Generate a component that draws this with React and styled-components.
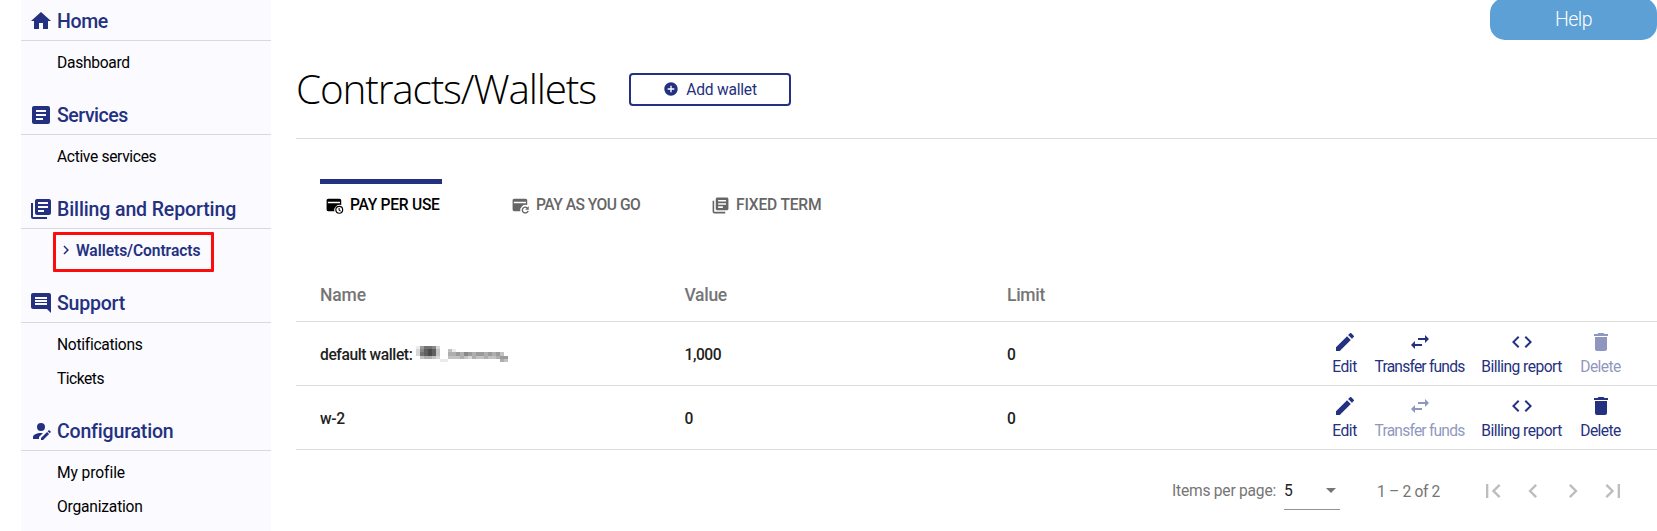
import React from 'react';
import styled, { createGlobalStyle } from 'styled-components';
import {
  MdHome, MdArticle, MdLibraryBooks, MdComment, MdChevronRight, MdChevronLeft,
  MdAddCircle, MdEdit, MdSwapHoriz, MdCode, MdDelete, MdArrowDropDown,
  MdFirstPage, MdLastPage,
} from 'react-icons/md';

const navy = '#243180';
const line = '#dedede';

const GlobalStyle = createGlobalStyle`
  *, *::before, *::after { box-sizing: border-box; }
  body {
    margin: 0;
    overflow: hidden;
    background: #fff;
    color: #000;
    font-family: Roboto, 'Open Sans', sans-serif;
    font-size: 15.6px;
  }
  svg { display: block; flex: none; }
`;

const Page = styled.div`
  display: flex;
  height: 531px;
  padding-left: 21px;
  overflow: hidden;
`;

/* Letter spacing is given per label, in px. */
const Label = styled.span`
  letter-spacing: ${(p) => p.$track || 0}px;
  white-space: pre;
`;

const Sidebar = styled.nav`
  flex: none;
  width: 250px;
  background: #fafaff;
`;

const SectionHead = styled.div`
  display: flex;
  align-items: center;
  gap: 4px;
  height: 41px;
  padding: 2px 0 0 8px;
  border-bottom: 1px solid #d9d9e0;
  color: ${navy};
  font-size: 19.5px;
  font-weight: 500;
`;

const SectionItems = styled.div`
  padding: 4px 0 15px 36px;
`;

const NavItem = styled.a`
  position: relative;
  display: flex;
  align-items: center;
  gap: 1px;
  height: 34px;
  color: ${(p) => (p.$active ? navy : '#000')};
  font-weight: ${(p) => (p.$active ? 600 : 400)};
  ${Label} { padding-top: 2px; }
`;

const Highlight = styled.span`
  position: absolute;
  left: -4px;
  top: -1px;
  width: 161px;
  height: 40px;
  border: 3px solid #fb0d0d;
  border-radius: 1px;
`;

const Main = styled.main`
  flex: 1;
  display: flex;
  flex-direction: column;
  margin-left: 25px;
`;

const TopBar = styled.div`
  display: flex;
  justify-content: flex-end;
  height: 40px;
`;

const HelpButton = styled.button`
  width: 167px;
  height: 42px;
  margin: -2px 0 0;
  padding: 1px 0 0;
  border: 0;
  border-radius: 15px;
  background: #5da0d5;
  color: #fff;
  font: 300 19.5px Roboto, sans-serif;
`;

const Heading = styled.header`
  display: flex;
  align-items: center;
  height: 98px;
  padding-top: 1px;
`;

const Title = styled.h1`
  width: 333px;
  margin: 0;
  font: 300 40.5px/60px 'Open Sans', sans-serif;
`;

const AddButton = styled.button`
  display: flex;
  align-items: center;
  justify-content: center;
  gap: 7px;
  width: 162px;
  height: 33px;
  padding: 0;
  border: 2px solid ${navy};
  border-radius: 4px;
  background: #fff;
  color: ${navy};
  font: 400 15.6px Roboto, sans-serif;
  ${Label} { padding-top: 2px; }
`;

const Tabs = styled.div`
  display: flex;
  gap: 64px;
  height: 129px;
  padding: 40px 0 0 24px;
  border-top: 1px solid ${line};
`;

const Tab = styled.div`
  display: flex;
  align-items: center;
  gap: 6px;
  width: ${(p) => p.$width}px;
  height: 50px;
  padding: 0 0 2px 5px;
  border-top: 5px solid ${(p) => (p.$active ? navy : 'transparent')};
  color: ${(p) => (p.$active ? '#000' : '#666')};
  font-weight: 500;
`;

const Row = styled.div`
  display: grid;
  grid-template-columns: 364.5px 322.5px 1fr auto;
  align-items: center;
  height: ${(p) => (p.$head ? 56 : 64)}px;
  padding: 0 32px 0 24px;
  border-bottom: 1px solid ${line};
  color: ${(p) => (p.$head ? '#757575' : '#212121')};
  font-size: ${(p) => (p.$head ? 17.5 : 15.6)}px;
  font-weight: 500;
  > ${Label} { padding-top: 2px; }
`;

const NameCell = styled.div`
  display: flex;
  align-items: center;
  gap: 4px;
  ${Label} { padding-top: 2px; }
`;

const Actions = styled.div`
  display: flex;
  gap: 16px;
`;

const Action = styled.div`
  display: flex;
  flex-direction: column;
  align-items: center;
  width: ${(p) => p.$width}px;
  height: 47px;
  color: ${navy};
  font-size: 15.6px;
  font-weight: 400;
  line-height: 26px;
  opacity: ${(p) => (p.$disabled ? 0.5 : 1)};
  ${Label} { padding-right: 1px; }
`;

const Paginator = styled.div`
  display: flex;
  justify-content: flex-end;
  align-items: center;
  height: 81px;
  padding-right: 24px;
  color: #757575;
`;

const PageSize = styled.div`
  display: flex;
  align-items: center;
  justify-content: space-between;
  width: 56px;
  height: 38px;
  margin: 0 37px 0 8px;
  border-bottom: 1px solid #949494;
  color: #212121;
  svg { color: #757575; margin-right: -3px; }
  span { padding-top: 2px; }
`;

const PageRange = styled.div`
  width: 96px;
  padding-top: 2px;
`;

const PageButton = styled.button`
  display: flex;
  align-items: center;
  justify-content: center;
  width: 40px;
  height: 40px;
  padding: 0;
  border: 0;
  background: none;
  color: #bdbdbd;
`;

const UserEditIcon = ({ size }) => (
  <svg width={size} height={size} viewBox="0 0 24 24" fill="currentColor">
    <path d="M21.7,13.35L20.7,14.35L18.65,12.3L19.65,11.3C19.86,11.09 20.21,11.09 20.42,11.3L21.7,12.58C21.91,12.79 21.91,13.14 21.7,13.35M12,18.94L18.06,12.88L20.11,14.93L14.06,21H12V18.94M12,14C7.58,14 4,15.79 4,18V20H10V18.11L14,14.11C13.34,14.03 12.67,14 12,14M12,4A4,4 0 0,0 8,8A4,4 0 0,0 12,12A4,4 0 0,0 16,8A4,4 0 0,0 12,4Z" />
  </svg>
);

const Card = ({ size, children }) => (
  <svg width={size} height={size} viewBox="0 0 24 24" fill="none">
    <path fill="currentColor" fillRule="evenodd" d="M4 3.5h14.5a2 2 0 0 1 2 2v6a6.6 6.6 0 0 0-8.6 7.7H4a2 2 0 0 1-2-2V5.500a2 2 0 0 1 2-2zM3.600 7.200v1.900h15.300v-1.900z" />
    {children}
  </svg>
);

const CardClockIcon = ({ size }) => (
  <Card size={size}>
    <circle cx="18" cy="17.500" r="4.300" fill="#fff" stroke="currentColor" strokeWidth="1.500" />
    <path d="M17.800 15v2.800l2 1.300" stroke="currentColor" strokeWidth="1.300" />
  </Card>
);

const CardRefreshIcon = ({ size }) => (
  <Card size={size}>
    <path d="M20.600 15.100a3.700 3.700 0 1 0 1 3.600" stroke="currentColor" strokeWidth="1.700" />
    <path d="M22.400 12.900v4.600h-4.600z" fill="currentColor" />
  </Card>
);

/* Opacity of each 4px block of the redacted account name, in tenths. */
const blocks = [
  '15776200000000000000000',
  '26898300310000000000000',
  '27898300445465455454530',
  '03443200333432433433455',
  '00000011000000000000043',
];

const Redacted = () => (
  <svg width="92" height="16" viewBox="0 0 92 16" shapeRendering="crispEdges">
    {blocks.map((r, y) =>
      [...r].map((v, x) => (
        <rect key={`${x}-${y}`} x={x * 4} y={y * 3.2} width="4" height="3.2" fill="#222" fillOpacity={v / 11} />
      )))}
  </svg>
);

const sections = [
  { title: 'Home', track: -0.36, Icon: MdHome, items: [['Dashboard', -0.29]] },
  { title: 'Services', track: -0.48, Icon: MdArticle, items: [['Active services', -0.34]] },
  { title: 'Billing and Reporting', track: -0.12, Icon: MdLibraryBooks, items: [['Wallets/Contracts', -0.07, true]] },
  { title: 'Support', track: -0.22, Icon: MdComment, items: [['Notifications', -0.28], ['Tickets', -0.5]] },
  { title: 'Configuration', track: -0.18, Icon: UserEditIcon, items: [['My profile', -0.09], ['Organization', -0.2]] },
];

const tabs = [
  { name: 'PAY PER USE', track: -0.27, width: 122, Icon: CardClockIcon, active: true },
  { name: 'PAY AS YOU GO', track: -0.5, width: 136, Icon: CardRefreshIcon },
  { name: 'FIXED TERM', track: -0.18, width: 124, Icon: MdLibraryBooks },
];

const actions = [
  { name: 'Edit', track: -0.43, width: 24, Icon: MdEdit },
  { name: 'Transfer funds', track: -0.79, width: 94, Icon: MdSwapHoriz },
  { name: 'Billing report', track: -0.53, width: 78, Icon: MdCode },
  { name: 'Delete', track: -0.59, width: 48, Icon: MdDelete },
];

const wallets = [
  { name: 'default wallet:', track: -0.4, redacted: true, value: '1,000', limit: '0', disabled: 'Delete' },
  { name: 'w-2', track: -0.3, value: '0', limit: '0', disabled: 'Transfer funds' },
];

export default function App() {
  return (
    <Page>
      <GlobalStyle />
      <Sidebar>
        {sections.map(({ title, track, Icon, items }) => (
          <div key={title}>
            <SectionHead><Icon size={24} /><Label $track={track}>{title}</Label></SectionHead>
            <SectionItems>
              {items.map(([name, spacing, active]) => (
                <NavItem key={name} $active={active}>
                  {active && <MdChevronRight size={18} />}
                  <Label $track={spacing}>{name}</Label>
                  {active && <Highlight />}
                </NavItem>
              ))}
            </SectionItems>
          </div>
        ))}
      </Sidebar>
      <Main>
        <TopBar><HelpButton><Label $track={-0.5}>Help</Label></HelpButton></TopBar>
        <Heading>
          <Title><Label $track={-1.16}>Contracts/Wallets</Label></Title>
          <AddButton><MdAddCircle size={16} /><Label $track={-0.22}>Add wallet</Label></AddButton>
        </Heading>
        <Tabs>
          {tabs.map(({ name, track, width, Icon, active }) => (
            <Tab key={name} $width={width} $active={active}>
              <Icon size={19} /><Label $track={track}>{name}</Label>
            </Tab>
          ))}
        </Tabs>
        <Row $head>
          <Label $track={-0.15}>Name</Label>
          <Label $track={-0.3}>Value</Label>
          <Label $track={-0.3}>Limit</Label>
        </Row>
        {wallets.map((w) => (
          <Row key={w.name}>
            <NameCell><Label $track={w.track}>{w.name}</Label>{w.redacted && <Redacted />}</NameCell>
            <Label $track={-0.45}>{w.value}</Label>
            <Label>{w.limit}</Label>
            <Actions>
              {actions.map(({ name, track, width, Icon }) => (
                <Action key={name} $width={width} $disabled={w.disabled === name}>
                  <Icon size={24} /><Label $track={track}>{name}</Label>
                </Action>
              ))}
            </Actions>
          </Row>
        ))}
        <Paginator>
          <Label $track={-0.23}>Items per page:</Label>
          <PageSize><span>5</span><MdArrowDropDown size={24} /></PageSize>
          <PageRange><Label $track={-0.33}>1 – 2 of 2</Label></PageRange>
          {[MdFirstPage, MdChevronLeft, MdChevronRight, MdLastPage].map((Icon, i) => (
            <PageButton key={i}><Icon size={28} /></PageButton>
          ))}
        </Paginator>
      </Main>
    </Page>
  );
}
